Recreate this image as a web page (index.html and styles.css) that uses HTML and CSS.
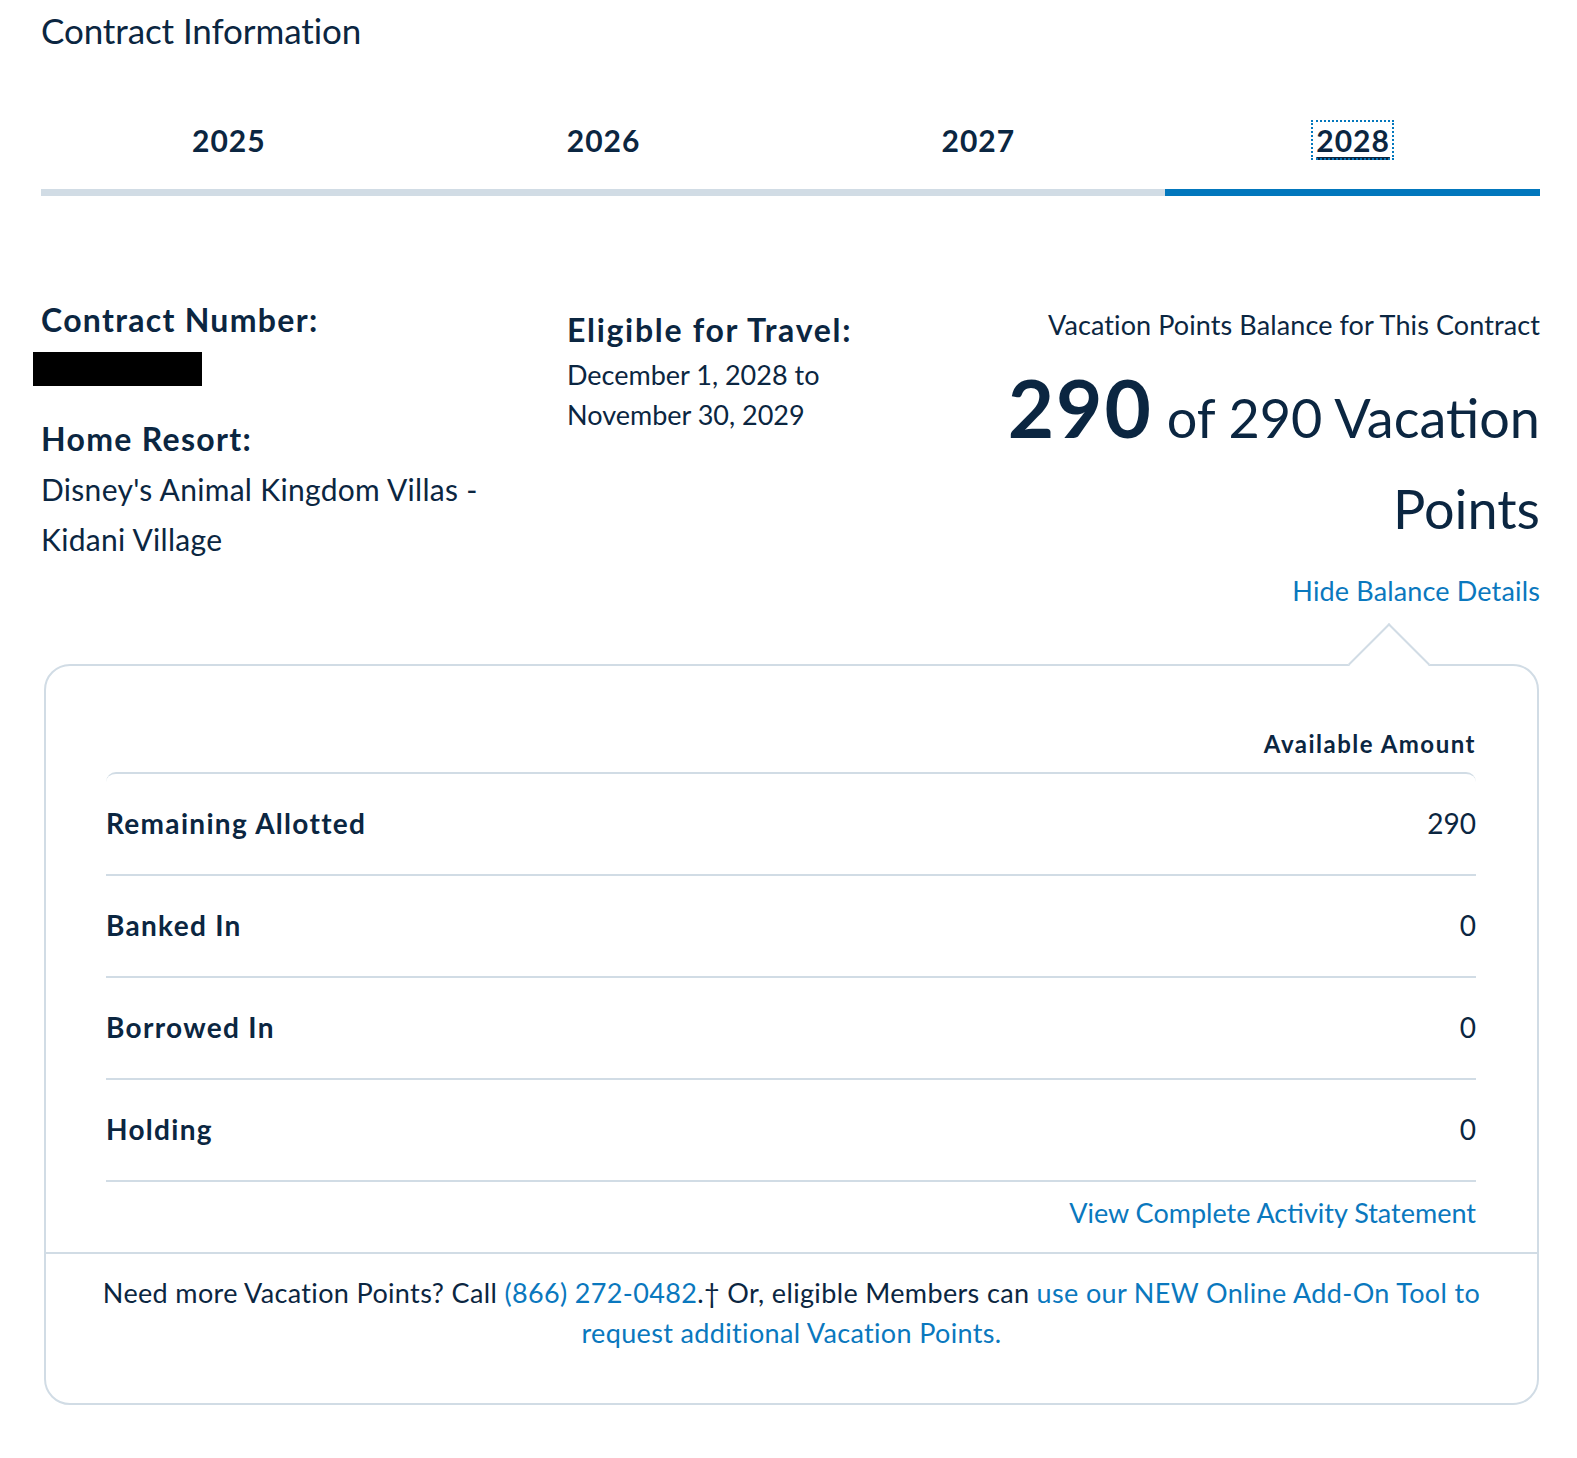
FILE: index.html
```html
<!DOCTYPE html>
<html lang="en">
<head>
<meta charset="utf-8">
<title>Contract Information</title>
<link rel="stylesheet" href="styles.css">
</head>
<body>
<main class="page">
  <h1 class="title">Contract Information</h1>

  <nav class="tabs">
    <div class="tab"><span class="tab-label">2025</span></div>
    <div class="tab"><span class="tab-label">2026</span></div>
    <div class="tab"><span class="tab-label">2027</span></div>
    <div class="tab tab-active"><span class="tab-label tab-focus">2028</span></div>
  </nav>

  <section class="info">
    <div class="col col-left">
      <h2 class="label">Contract Number:</h2>
      <div class="redacted"></div>
      <h2 class="label label-resort">Home Resort:</h2>
      <p class="value value-resort">Disney's Animal Kingdom Villas - Kidani Village</p>
    </div>
    <div class="col col-mid">
      <h2 class="label label-travel">Eligible for Travel:</h2>
      <p class="value value-travel">December 1, 2028 to<br>November 30, 2029</p>
    </div>
    <div class="col col-right">
      <p class="balance-caption">Vacation Points Balance for This Contract</p>
      <p class="balance"><span class="balance-big">290</span> of 290 Vacation Points</p>
      <a class="link hide-link">Hide Balance Details</a>
    </div>
  </section>

  <section class="card">
    <div class="card-arrow"></div>
    <div class="card-body">
      <div class="table-head">Available Amount</div>
      <div class="table">
        <div class="row"><span class="row-name">Remaining Allotted</span><span class="row-val">290</span></div>
        <div class="row"><span class="row-name">Banked In</span><span class="row-val">0</span></div>
        <div class="row"><span class="row-name">Borrowed In</span><span class="row-val">0</span></div>
        <div class="row"><span class="row-name">Holding</span><span class="row-val">0</span></div>
      </div>
      <div class="statement"><a class="link">View Complete Activity Statement</a></div>
    </div>
    <div class="card-foot">
      Need more Vacation Points? Call <a class="link">(866) 272-0482</a>.† Or, eligible Members can <a class="link">use our NEW Online Add-On Tool to request additional Vacation Points.</a>
    </div>
  </section>
</main>
</body>
</html>
```

FILE: styles.css
```css
* { box-sizing: border-box; }

body {
  margin: 0;
  background: #ffffff;
  color: #0b2641;
  font-family: Lato, "Liberation Sans", sans-serif;
}

.page {
  width: 1577px;
  padding: 0 37px 60px 41px;
}

.title {
  margin: 0;
  padding-top: 10px;
  font-size: 35px;
  line-height: 40px;
  font-weight: 400;
  letter-spacing: -0.1px;
}

.tabs {
  margin-top: 73px;
  display: grid;
  grid-template-columns: repeat(4, 1fr);
}

.tab {
  display: flex;
  justify-content: center;
  padding-bottom: 32px;
  border-bottom: 7px solid #d1dce5;
}

.tab-active { border-bottom-color: #0277bd; }

.tab-label {
  font-size: 30px;
  line-height: 34px;
  font-weight: 700;
  letter-spacing: 1px;
  padding: 0 1px 0 2px;
}

.tab-focus {
  text-decoration: underline;
  text-decoration-thickness: 3px;
  text-underline-offset: 5px;
  outline: 2px dotted #0277bd;
  outline-offset: 1px;
}

.info {
  margin-top: 106px;
  display: grid;
  grid-template-columns: 526px 420px 1fr;
  align-items: start;
}

.label {
  margin: 0;
  font-size: 32px;
  line-height: 36px;
  font-weight: 700;
  letter-spacing: 1.3px;
}

.redacted {
  margin: 14px 0 0 -8px;
  width: 169px;
  height: 34px;
  background: #000;
}

.label-resort { margin-top: 35px; }

.value {
  margin: 0;
  font-weight: 400;
}

.value-resort {
  margin-top: 7px;
  font-size: 30px;
  letter-spacing: 0.3px;
  line-height: 50px;
  width: 470px;
}

.label-travel {
  margin-top: 10px;
  letter-spacing: 1.7px;
}

.value-travel {
  margin-top: 7px;
  line-height: 40px;
  font-size: 27px;
}

.col-right {
  display: flex;
  flex-direction: column;
  align-items: flex-end;
  text-align: right;
}

.balance-caption {
  margin: 7px 0 0;
  font-size: 27px;
  line-height: 32px;
  letter-spacing: 0.1px;
}

.balance {
  margin: 21px 0 0;
  font-size: 54px;
  line-height: 91px;
  width: 540px;
}

.balance-big {
  font-size: 80px;
  font-weight: 700;
  letter-spacing: 2px;
}

.link {
  color: #0a78be;
  text-decoration: none;
}

.hide-link {
  margin-top: 21px;
  font-size: 27px;
  line-height: 32px;
  letter-spacing: 0.15px;
}

.card {
  position: relative;
  margin: 57px 1px 0 3px;
  border: 2px solid #d1dce5;
  border-radius: 26px;
}

.card-arrow {
  position: absolute;
  top: -31px;
  right: 119px;
  width: 58px;
  height: 58px;
  background: #fff;
  border-top: 2px solid #d1dce5;
  border-left: 2px solid #d1dce5;
  transform: rotate(45deg);
}

.card-body {
  position: relative;
  padding: 63px 61px 0 60px;
}

.table-head {
  text-align: right;
  font-size: 24px;
  line-height: 30px;
  font-weight: 700;
  letter-spacing: 1.5px;
  padding-bottom: 13px;
}

.table {
  border-top: 2px solid #d1dce5;
  border-radius: 10px 10px 0 0;
}

.row {
  display: flex;
  justify-content: space-between;
  align-items: center;
  height: 102px;
  border-bottom: 2px solid #d1dce5;
  font-size: 28px;
  padding-bottom: 3px;
}

.row-name {
  font-weight: 700;
  letter-spacing: 1.3px;
}

.statement {
  text-align: right;
  font-size: 27px;
  line-height: 32px;
  padding: 15px 0 23px;
}

.card-foot {
  border-top: 2px solid #d1dce5;
  text-align: center;
  font-size: 27px;
  letter-spacing: 0.35px;
  line-height: 40px;
  padding: 19px 40px 50px;
}
```
